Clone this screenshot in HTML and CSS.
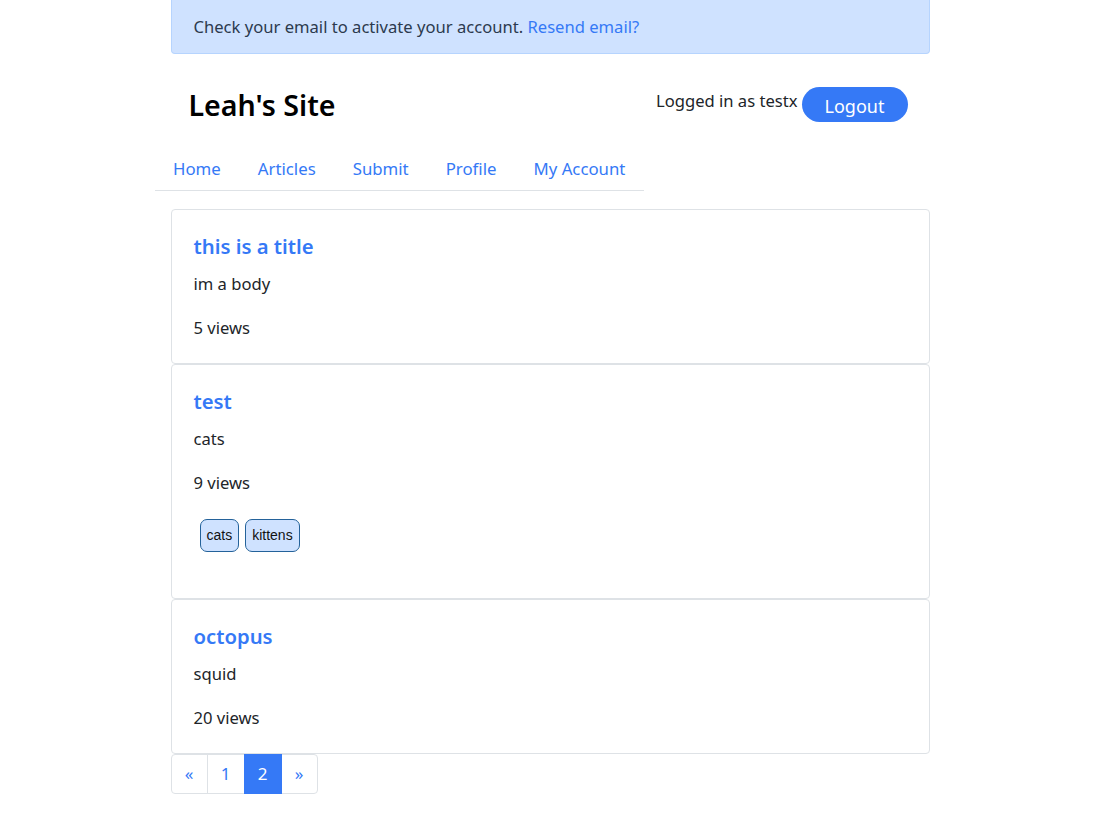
FILE: index.html
```html
<!DOCTYPE html>
<html lang="en">
<head>
<meta charset="utf-8">
<title>Leah's Site</title>
<link rel="stylesheet" href="styles.css">
</head>
<body>
<div class="container">
  <div class="alert">Check your email to activate your account. <a href="#">Resend email?</a></div>
  <header class="header">
    <h1 class="site-title">Leah's Site</h1>
    <div class="user">
      <span class="logged">Logged in as testx</span>
      <button class="logout">Logout</button>
    </div>
  </header>
  <nav class="nav">
    <a href="#">Home</a>
    <a href="#">Articles</a>
    <a href="#">Submit</a>
    <a href="#">Profile</a>
    <a href="#">My Account</a>
  </nav>
  <main class="list">
    <article class="card">
      <h2 class="card-title"><a href="#">this is a title</a></h2>
      <p>im a body</p>
      <p class="views">5 views</p>
    </article>
    <article class="card">
      <h2 class="card-title"><a href="#">test</a></h2>
      <p>cats</p>
      <p class="views">9 views</p>
      <div class="tags"><span class="tag">cats</span><span class="tag">kittens</span></div>
    </article>
    <article class="card">
      <h2 class="card-title"><a href="#">octopus</a></h2>
      <p>squid</p>
      <p class="views">20 views</p>
    </article>
  </main>
  <ul class="pagination">
    <li><a href="#">&laquo;</a></li>
    <li><a href="#">1</a></li>
    <li class="active"><a href="#">2</a></li>
    <li><a href="#">&raquo;</a></li>
  </ul>
</div>
</body>
</html>
```
FILE: styles.css
```css
* { box-sizing: border-box; }
body {
  margin: 0;
  font-family: "Noto Sans", "Open Sans", sans-serif;
  font-size: 16.6px;
  line-height: 24px;
  color: #212529;
  background: #fff;
}
a { color: #3579f6; text-decoration: none; }
.container {
  width: 759px;
  margin: 0 auto;
}
.alert {
  height: 54px;
  padding: 15px 22px;
  background: #cfe2ff;
  border: 1px solid #b6d4fe;
  border-top: none;
  border-radius: 0 0 4px 4px;
  color: #2c3a4e;
}
.header {
  display: flex;
  justify-content: space-between;
  align-items: flex-start;
  padding: 33px 22px 0 18px;
  height: 94px;
}
.site-title {
  margin: 0;
  font-size: 28.6px;
  line-height: 36px;
  font-weight: 600;
  color: #000;
}
.user {
  display: flex;
  align-items: flex-start;
  gap: 4px;
}
.logged { margin-top: 2px; }
.logout {
  font-family: inherit;
  font-size: 18px;
  background: #3579f6;
  color: #fff;
  border: none;
  border-radius: 18px;
  width: 106px;
  height: 35px;
  padding: 3px 0 0;
  line-height: 32px;
}
.nav {
  display: flex;
  width: max-content;
  margin-left: -16px;
  border-bottom: 1px solid #dee2e6;
  white-space: nowrap;
}
.nav a {
  padding: 9px 18.5px 9px;
  font-size: 16.8px;
  line-height: 24px;
}
.list { margin-top: 18px; }
.card {
  border: 1px solid #dee2e6;
  border-radius: 4px;
  padding: 24px 22px 23px;
}
.card-title {
  margin: 0 0 14px;
  font-size: 20.3px;
  line-height: 24px;
  font-weight: 600;
}
.card p { margin: 0 0 20px; }
.card p.views { margin-bottom: 0; }
.tags {
  display: flex;
  gap: 6px;
  margin: 24px 0 23px 6px;
}
.tag {
  font-family: "Liberation Sans", Arial, sans-serif;
  font-size: 14px;
  line-height: 19px;
  padding: 6px 6px;
  background: #cfe2ff;
  border: 1px solid #24629a;
  border-radius: 7px;
  color: #111;
}
.pagination {
  list-style: none;
  display: flex;
  margin: 0;
  padding: 0;
}
.pagination li a {
  display: block;
  height: 40px;
  line-height: 38px;
  border: 1px solid #dee2e6;
  margin-left: -1px;
  text-align: center;
  font-size: 17px;
}
.pagination li:first-child a { margin-left: 0; border-radius: 4px 0 0 4px; width: 37px; }
.pagination li:nth-child(2) a { width: 38px; }
.pagination li:nth-child(3) a { width: 38px; }
.pagination li:last-child a { border-radius: 0 4px 4px 0; width: 37px; }
.pagination li.active a {
  background: #3579f6;
  border-color: #3579f6;
  color: #fff;
  position: relative;
}
```
